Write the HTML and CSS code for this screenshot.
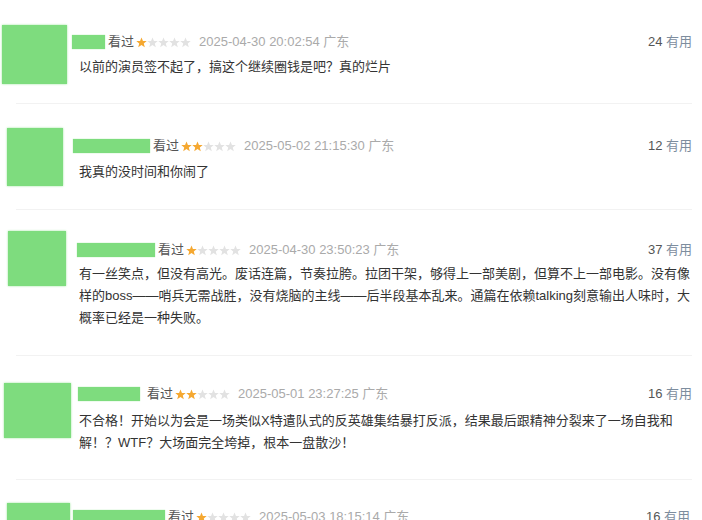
FILE: index.html
```html
<!DOCTYPE html>
<html lang="zh-CN">
<head>
    <meta charset="UTF-8">
    <meta name="viewport" content="width=device-width, initial-scale=1.0">
    <title>短评</title>
    <link rel="stylesheet" href="styles.css">
</head>
<body>
    <svg class="defs" width="0" height="0">
        <symbol id="star" viewBox="0 0 11 11">
            <polygon points="5.5,0.4 6.95,4 10.7,4.1 7.8,6.45 8.8,10.3 5.5,8.1 2.2,10.3 3.2,6.45 0.3,4.1 4.05,4"/>
        </symbol>
    </svg>

    <div class="comments">

        <div class="comment c1">
            <div class="row">
                <div class="avatar-cell"><div class="avatar"></div></div>
                <div class="main">
                    <div class="info">
                        <span class="name"></span>
                        <span class="watched">看过</span>
                        <svg class="stars" width="56" height="11" viewBox="0 0 56 11">
                            <use href="#star" x="0" width="11" height="11" class="on"/><use href="#star" x="11" width="11" height="11"/><use href="#star" x="22" width="11" height="11"/><use href="#star" x="33" width="11" height="11"/><use href="#star" x="44" width="11" height="11"/>
                        </svg>
                        <span class="time">2025-04-30 20:02:54 广东</span>
                        <span class="votes"><span class="num">24</span> 有用</span>
                    </div>
                    <p class="text">以前的演员签不起了，搞这个继续圈钱是吧？真的烂片</p>
                </div>
            </div>
        </div>

        <div class="comment c2">
            <div class="row">
                <div class="avatar-cell"><div class="avatar"></div></div>
                <div class="main">
                    <div class="info">
                        <span class="name"></span>
                        <span class="watched">看过</span>
                        <svg class="stars" width="56" height="11" viewBox="0 0 56 11">
                            <use href="#star" x="0" width="11" height="11" class="on"/><use href="#star" x="11" width="11" height="11" class="on"/><use href="#star" x="22" width="11" height="11"/><use href="#star" x="33" width="11" height="11"/><use href="#star" x="44" width="11" height="11"/>
                        </svg>
                        <span class="time">2025-05-02 21:15:30 广东</span>
                        <span class="votes"><span class="num">12</span> 有用</span>
                    </div>
                    <p class="text">我真的没时间和你闹了</p>
                </div>
            </div>
        </div>

        <div class="comment c3">
            <div class="row">
                <div class="avatar-cell"><div class="avatar"></div></div>
                <div class="main">
                    <div class="info">
                        <span class="name"></span>
                        <span class="watched">看过</span>
                        <svg class="stars" width="56" height="11" viewBox="0 0 56 11">
                            <use href="#star" x="0" width="11" height="11" class="on"/><use href="#star" x="11" width="11" height="11"/><use href="#star" x="22" width="11" height="11"/><use href="#star" x="33" width="11" height="11"/><use href="#star" x="44" width="11" height="11"/>
                        </svg>
                        <span class="time">2025-04-30 23:50:23 广东</span>
                        <span class="votes"><span class="num">37</span> 有用</span>
                    </div>
                    <p class="text">有一丝笑点，但没有高光。废话连篇，节奏拉胯。拉团干架，够得上一部美剧，但算不上一部电影。没有像样的boss——哨兵无需战胜，没有烧脑的主线——后半段基本乱来。通篇在依赖talking刻意输出人味时，大概率已经是一种失败。</p>
                </div>
            </div>
        </div>

        <div class="comment c4">
            <div class="row">
                <div class="avatar-cell"><div class="avatar"></div></div>
                <div class="main">
                    <div class="info">
                        <span class="name"></span>
                        <span class="watched">看过</span>
                        <svg class="stars" width="56" height="11" viewBox="0 0 56 11">
                            <use href="#star" x="0" width="11" height="11" class="on"/><use href="#star" x="11" width="11" height="11" class="on"/><use href="#star" x="22" width="11" height="11"/><use href="#star" x="33" width="11" height="11"/><use href="#star" x="44" width="11" height="11"/>
                        </svg>
                        <span class="time">2025-05-01 23:27:25 广东</span>
                        <span class="votes"><span class="num">16</span> 有用</span>
                    </div>
                    <p class="text">不合格！开始以为会是一场类似X特遣队式的反英雄集结暴打反派，结果最后跟精神分裂来了一场自我和解！？WTF？大场面完全垮掉，根本一盘散沙！</p>
                </div>
            </div>
        </div>

        <div class="comment c5">
            <div class="row">
                <div class="avatar-cell"><div class="avatar"></div></div>
                <div class="main">
                    <div class="info">
                        <span class="name"></span>
                        <span class="watched">看过</span>
                        <svg class="stars" width="56" height="11" viewBox="0 0 56 11">
                            <use href="#star" x="0" width="11" height="11" class="on"/><use href="#star" x="11" width="11" height="11"/><use href="#star" x="22" width="11" height="11"/><use href="#star" x="33" width="11" height="11"/><use href="#star" x="44" width="11" height="11"/>
                        </svg>
                        <span class="time">2025-05-03 18:15:14 广东</span>
                        <span class="votes"><span class="num">16</span> 有用</span>
                    </div>
                </div>
            </div>
        </div>

    </div>
</body>
</html>
```

FILE: styles.css
```css
*{
    margin: 0;
    padding: 0;
    box-sizing: border-box;
}

body{
    background-color: #fff;
    font-family: "Liberation Sans", "Noto Sans CJK SC", sans-serif;
    font-size: 13px;
    color: #333;
    overflow: hidden;
}

.defs{
    position: absolute;
}

.comments{
    padding-top: 25px;
}

.comment{
    &::after{
        content: "";
        display: block;
        height: 1px;
        margin: 0 10px 0 16px;
        background-color: #f2f2f2;
    }
}

.row{
    display: flex;
    align-items: flex-start;
    padding-right: 12px;
}

.avatar-cell{
    flex: 0 0 72px;
}

.avatar{
    background-color: #7edc7e;
    box-shadow: 0 0 2px #9be59b;
}

.main{
    flex: 1;
}

.info{
    display: flex;
    align-items: center;
    height: 18px;
    line-height: 18px;

    .name{
        height: 14px;
        background-color: #7edc7e;
        box-shadow: 0 0 1px #9be59b;
        margin-right: 3px;
    }

    .watched{
        color: #555;
        margin-right: 2px;
    }

    .stars{
        fill: #e2e2e2;
        margin-right: 7px;

        .on{
            fill: #f5a831;
        }
    }

    .time{
        color: #aaa;
    }

    .votes{
        margin-left: auto;
        color: #7d8d9e;

        .num{
            color: #555;
        }
    }
}

.text{
    padding-left: 7px;
    width: 620px;
    line-height: 22px;
}

/* per-comment offsets, screenshot is a collage */
.c1{
    .avatar{ margin-left: 2px; width: 65px; height: 59px; }
    .info{ margin-top: 8px; }
    .name{ width: 33px; }
    .text{ margin-top: 5px; }
    .row{ padding-bottom: 19px; }
}

.c2{
    margin-top: 24px;
    .avatar{ margin-left: 7px; width: 56px; height: 58px; }
    .info{ margin-top: 9px; }
    .name{ width: 77px; margin-left: 1px; }
    .text{ margin-top: 6px; }
    .row{ padding-bottom: 23px; }
}

.c3{
    margin-top: 21px;
    .avatar{ margin-left: 8px; width: 58px; height: 55px; }
    .info{ margin-top: 10px; }
    .name{ width: 78px; margin-left: 5px; }
    .text{ margin-top: 4px; }
    .row{ padding-bottom: 26px; }
}

.c4{
    margin-top: 27px;
    .avatar{ margin-left: 4px; width: 67px; height: 55px; }
    .info{ margin-top: 2px; }
    .name{ width: 62px; margin-left: 6px; margin-right: 7px; }
    .text{ margin-top: 7px; }
    .row{ padding-bottom: 25px; }
}

.c5{
    margin-top: 23px;
    .avatar{ margin-left: 7px; width: 63px; height: 56px; }
    .info{ margin-top: 5px; }
    .name{ width: 92px; margin-left: 1px; }
}
```
